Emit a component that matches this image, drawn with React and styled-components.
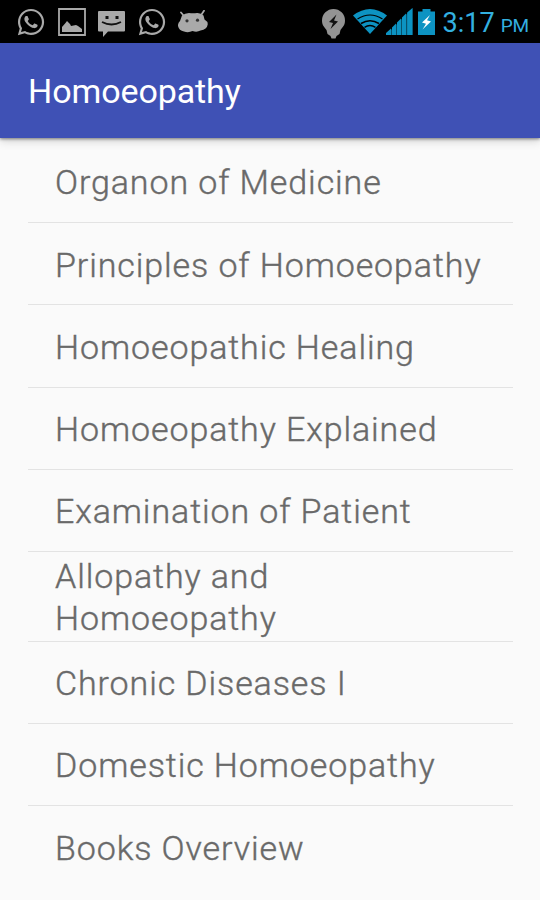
import React from "react";
import styled, { createGlobalStyle } from "styled-components";
import { FaWhatsapp } from "react-icons/fa";

const colors = {
  primary: "#3f51b5",
  background: "#fafafa",
  text: "#696969",
  divider: "#e3e3e3",
  notification: "#a9a9a9",
  holo: "#0d93c2",
  clock: "#33b0e0",
};

const books = [
  { title: "Organon of Medicine" },
  { title: "Principles of Homoeopathy" },
  { title: "Homoeopathic Healing" },
  { title: "Homoeopathy Explained" },
  { title: "Examination of Patient" },
  { title: "Allopathy and Homoeopathy", wrap: true },
  { title: "Chronic Diseases I" },
  { title: "Domestic Homoeopathy" },
  { title: "Books Overview" },
];

const PictureIcon = () => (
  <Icon width="28" height="28" viewBox="0 0 28 28">
    <path d="M1 1h26v26H1z" fill="none" stroke="currentColor" strokeWidth="1.800" />
    <path d="M4 24v-5l3.500-4L9 13l3 3 1 2 5-1 2 1 4 3v3z" fill="currentColor" />
  </Icon>
);

const MessageIcon = () => (
  <Icon width="27" height="26" viewBox="0 0 27 26">
    <path
      d="M1 0h25q1 0 1 1v18.500q0 1-1 1H10L5 26v-5.500H1q-1 0-1-1V1q0-1 1-1z"
      fill="currentColor"
    />
    <path d="M7.500 5h3v3h-3zM17.500 5h3v3h-3z" fill="#111" />
    <path d="M4 11q9.500 5 19 0" fill="none" stroke="#111" strokeWidth="1.800" />
  </Icon>
);

const AndroidIcon = () => (
  <Icon width="30" height="23" viewBox="0 0 30 23">
    <path
      d="M4 5.500q3-2.500 7-2.500 4 .7 8 0 4-.2 6.500 2.500l1 4q3.500 2 3.200 5-.7 5-7.200 6-3.500 2-8 .5-4 2-8.500.5-5-1-6-5.500-.3-3 2-5z"
      fill="currentColor"
    />
    <path
      d="M6 6 3 2.500M22.500 6 26 .800"
      stroke="currentColor"
      strokeWidth="1.800"
      strokeLinecap="round"
    />
    <circle cx="9" cy="10.800" r="1.600" fill="#333" />
    <circle cx="19.500" cy="10.200" r="1.600" fill="#333" />
  </Icon>
);

const BulbIcon = () => (
  <Icon width="23" height="30" viewBox="0 0 23 30">
    <path
      d="M11.500 0A11.500 11.500 0 0 1 23 11.500c0 5-2.500 6.500-4.500 9.500l-1 4-3 2-1 2.500h-4l-1-2.500-3-2-1-4C2.500 18 0 16.500 0 11.500A11.500 11.500 0 0 1 11.500 0z"
      fill="currentColor"
    />
    <path d="M14.500 5.500 7 13l4 1-2.500 6L16 12.500l-4-1z" fill="#111" />
  </Icon>
);

const WifiIcon = () => (
  <Icon width="34" height="25" viewBox="0 0 34 25">
    <path d="M0 6.500Q17-6.500 34 6.500L17 25z" fill="currentColor" />
    <g fill="none" stroke="#000">
      <path d="M4.500 10q12.500-8 25 0" strokeWidth="1.200" />
      <path d="M8 14.500q9-5.500 18 0" strokeWidth="1.600" />
      <path d="M11.500 18.300q5.500-3.500 11 0" strokeWidth="1.400" />
    </g>
  </Icon>
);

const SignalIcon = () => (
  <Icon width="27" height="27" viewBox="0 0 27 27">
    <path
      d="M0 27v-2l5-4.500V27zM6 27v-7.500l4-4V27zM11 27V14.500l4-4V27zM16 27V9.500l4-4V27zM21.200 27V4.500L26.500 0v27z"
      fill="currentColor"
    />
    <path d="M0 27 26.500 0v27z" fill="currentColor" opacity=".55" />
  </Icon>
);

const BatteryIcon = () => (
  <Icon width="17" height="26" viewBox="0 0 17 26">
    <path d="M4.500 0h8v2.500H17V26H0V2.500h4.500z" fill="currentColor" />
    <path d="M12 6 4 13.500l4 1.200L4.500 20.500l8.500-8-4-1.200z" fill="#fff" />
  </Icon>
);

const App = () => {
  return (
    <Screen>
      <GlobalStyle />
      <StatusBar>
        <Notifications>
          <WhatsappIcon />
          <PictureIcon />
          <MessageIcon />
          <WhatsappIcon />
          <AndroidIcon />
        </Notifications>
        <System>
          <Muted>
            <BulbIcon />
          </Muted>
          <WifiIcon />
          <SignalIcon />
          <BatteryIcon />
          <Clock>
            3:17 <small>PM</small>
          </Clock>
        </System>
      </StatusBar>
      <AppBar>
        <Title>Homoeopathy</Title>
      </AppBar>
      <BookList>
        {books.map(({ title, wrap }) => (
          <Book key={title} $tall={wrap}>
            <BookTitle $narrow={wrap}>{title}</BookTitle>
          </Book>
        ))}
      </BookList>
    </Screen>
  );
};

export default App;

const GlobalStyle = createGlobalStyle`
  * {
    box-sizing: border-box;
  }

  body {
    margin: 0;
    background: ${colors.background};
    font-family: Roboto, "Liberation Sans", sans-serif;
  }
`;

const Screen = styled.div`
  width: 540px;
  height: 900px;
  overflow: hidden;
  background: ${colors.background};
`;

const StatusBar = styled.header`
  display: flex;
  justify-content: space-between;
  height: 43px;
  padding: 0 11px 0 17px;
  background: #000;
`;

const Notifications = styled.div`
  display: flex;
  align-items: center;
  gap: 12.5px;
  color: ${colors.notification};

  svg:nth-of-type(3) {
    margin-top: 5px;
  }

  svg:last-child {
    margin-left: -0.5px;
  }
`;

const System = styled.div`
  display: flex;
  align-items: center;
  color: ${colors.holo};

  svg + svg {
    margin-left: -1px;
  }

  svg:nth-of-type(3) {
    margin-left: 5px;
  }
`;

const Icon = styled.svg`
  display: block;
  flex: none;
`;

const WhatsappIcon = styled(FaWhatsapp)`
  width: 28px;
  height: 30px;
  flex: none;
`;

const Muted = styled.span`
  margin-right: 8px;
  padding-top: 4px;
  color: #939393;
`;

const Clock = styled.time`
  margin-left: 8px;
  padding-top: 6px;
  color: ${colors.clock};
  font-size: 27px;
  line-height: 40px;
  white-space: nowrap;

  small {
    margin-left: -0.5px;
    font-size: 19px;
    letter-spacing: -0.2px;
  }
`;

const AppBar = styled.div`
  position: relative;
  display: flex;
  align-items: center;
  height: 95px;
  padding-left: 28px;
  background: ${colors.primary};
  box-shadow: 0 1px 3px rgba(0, 0, 0, 0.45), 0 3px 9px rgba(0, 0, 0, 0.16);
`;

const Title = styled.h1`
  margin: 0;
  color: #fff;
  font-size: 34px;
  font-weight: 400;
  letter-spacing: -0.1px;
`;

const BookList = styled.ul`
  margin: 0;
  padding: 3px 27px 0 28px;
  list-style: none;
`;

const Book = styled.li`
  display: flex;
  align-items: center;
  height: ${({ $tall }) => ($tall ? "90px" : "82.2px")};
  padding: 3px 0 0 27px;
  border-bottom: 1.5px solid ${colors.divider};

  &:last-child {
    border-bottom: 0;
  }
`;

const BookTitle = styled.span`
  max-width: ${({ $narrow }) => ($narrow ? "300px" : "none")};
  color: ${colors.text};
  font-size: 34px;
  font-weight: 300;
  line-height: 41.5px;
  letter-spacing: 0.9px;
  white-space: ${({ $narrow }) => ($narrow ? "normal" : "nowrap")};
  -webkit-text-stroke: 0.4px ${colors.text};
`;
